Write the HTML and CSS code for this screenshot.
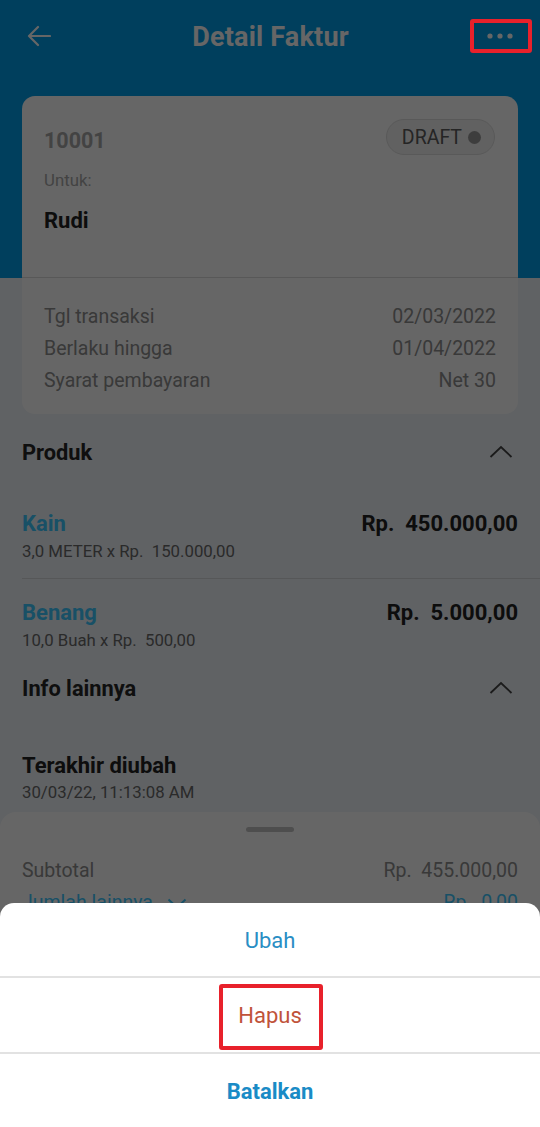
FILE: index.html
```html
<!DOCTYPE html>
<html lang="id">
<head>
<meta charset="utf-8">
<title>Detail Faktur</title>
<link rel="stylesheet" href="styles.css">
</head>
<body>
<div class="page">
  <div class="hero">
    <header class="appbar">
      <svg class="back" width="24" height="22" viewBox="0 0 24 22" aria-hidden="true">
        <path d="M23 11H2M11 2L2 11l9 9" fill="none" stroke="#fff" stroke-width="2.2" stroke-linecap="round" stroke-linejoin="round"/>
      </svg>
      <h1 class="title">Detail Faktur</h1>
      <svg class="more" width="28" height="8" viewBox="0 0 28 8" aria-hidden="true">
        <circle cx="4" cy="4" r="2.6" fill="#fff"/><circle cx="14" cy="4" r="2.6" fill="#fff"/><circle cx="24" cy="4" r="2.6" fill="#fff"/>
      </svg>
    </header>
    <section class="card">
      <div class="card-top">
        <div class="card-head">
          <span class="number">10001</span>
          <span class="pill">DRAFT<span class="pill-dot"></span></span>
        </div>
        <div class="label">Untuk:</div>
        <div class="name">Rudi</div>
      </div>
      <div class="card-bottom">
        <div class="kv"><span>Tgl transaksi</span><span>02/03/2022</span></div>
        <div class="kv"><span>Berlaku hingga</span><span>01/04/2022</span></div>
        <div class="kv"><span>Syarat pembayaran</span><span>Net 30</span></div>
      </div>
    </section>
  </div>

  <div class="section-head">
    <span>Produk</span>
    <svg class="chev" width="24" height="13" viewBox="0 0 24 13" aria-hidden="true"><path d="M1.5 12L12 2l10.5 10" fill="none" stroke="#444" stroke-width="1.8"/></svg>
  </div>
  <div class="item divided">
    <div class="item-row"><span class="item-name">Kain</span><span class="item-price">Rp.&nbsp; 450.000,00</span></div>
    <div class="item-sub">3,0 METER x Rp.&nbsp; 150.000,00</div>
  </div>
  <div class="item">
    <div class="item-row"><span class="item-name">Benang</span><span class="item-price">Rp.&nbsp; 5.000,00</span></div>
    <div class="item-sub">10,0 Buah x Rp.&nbsp; 500,00</div>
  </div>

  <div class="section-head">
    <span>Info lainnya</span>
    <svg class="chev" width="24" height="13" viewBox="0 0 24 13" aria-hidden="true"><path d="M1.5 12L12 2l10.5 10" fill="none" stroke="#444" stroke-width="1.8"/></svg>
  </div>
  <div class="info">
    <div class="info-title">Terakhir diubah</div>
    <div class="item-sub">30/03/22, 11:13:08 AM</div>
  </div>

  <section class="summary">
    <div class="handle"></div>
    <div class="sum-row"><span>Subtotal</span><span>Rp.&nbsp; 455.000,00</span></div>
    <div class="sum-row blue">
      <span class="more-amt">Jumlah lainnya
        <svg width="20" height="11" viewBox="0 0 20 11" aria-hidden="true"><path d="M1.5 1.5L10 9.5l8.5-8" fill="none" stroke="currentColor" stroke-width="2"/></svg>
      </span>
      <span>Rp.&nbsp; 0,00</span>
    </div>
  </section>
</div>

<div class="scrim"></div>

<div class="sheet">
  <div class="sheet-btn edit">Ubah</div>
  <div class="sheet-btn delete">Hapus</div>
  <div class="sheet-btn cancel">Batalkan</div>
</div>

<div class="mark mark-more"></div>
<div class="mark mark-delete"></div>
</body>
</html>
```

FILE: styles.css
```css
* { box-sizing: border-box; }
html, body { margin: 0; padding: 0; }
body {
  font-family: Roboto, "Noto Sans", "Liberation Sans", sans-serif;
  background: #f0f5fa;
  color: #222;
}
.page {
  height: 1127px;
  overflow: hidden;
  background: #f0f5fa;
}
.hero {
  background: linear-gradient(#009ee8 0, #009ee8 278px, #f0f5fa 278px);
}
.appbar {
  height: 74px;
  display: flex;
  align-items: center;
  justify-content: space-between;
  padding: 0 26px 0 27px;
}
.back { display: block; margin-top: -2px; }
.title {
  margin: 0 0 0 4px;
  font-size: 27px;
  font-weight: 700;
  color: #fff;
  letter-spacing: 0.2px;
}
.more { display: block; margin-top: -2px; }

.card {
  margin: 22px 22px 0;
  background: #fff;
  border-radius: 13px;
  overflow: hidden;
}
.card-top {
  padding: 23px 22px 0;
  border-bottom: 1.5px solid #dcdcdc;
  height: 182px;
}
.card-head {
  display: flex;
  justify-content: space-between;
  align-items: center;
  height: 36px;
}
.number {
  font-size: 21.5px;
  font-weight: 700;
  color: #a8a8a8;
  margin-top: 6px;
}
.pill {
  display: flex;
  align-items: center;
  gap: 6px;
  height: 36px;
  padding: 1px 13px 0 15px;
  border-radius: 18px;
  background: #f2f2f2;
  border: 1.5px solid #dedede;
  font-size: 19.5px;
  color: #5c5c5c;
  margin-right: 1px;
}
.pill-dot {
  width: 13px;
  height: 13px;
  border-radius: 50%;
  background: #9a9a9a;
  margin-top: -1px;
}
.label {
  margin-top: 15px;
  font-size: 16.8px;
  line-height: 20px;
  color: #a8a8a8;
}
.name {
  margin-top: 17px;
  font-size: 22px;
  line-height: 28px;
  font-weight: 700;
  color: #222;
}
.card-bottom {
  padding: 23px 22px 17px;
}
.kv {
  display: flex;
  justify-content: space-between;
  font-size: 19.5px;
  line-height: 32px;
  color: #8e8e8e;
}

.section-head {
  height: 76px;
  display: flex;
  align-items: center;
  justify-content: space-between;
  padding: 0 27px 0 22px;
  font-size: 21.8px;
  font-weight: 700;
  color: #262626;
}
.chev { display: block; margin-top: -2px; }

.item {
  padding: 19px 22px 0 22px;
}
.item.divided {
  padding-bottom: 17px;
  border-bottom: 1.5px solid #d6d9dd;
  margin-left: 22px;
  padding-left: 0;
}
.item-row {
  display: flex;
  justify-content: space-between;
  align-items: center;
  height: 28px;
}
.item-name {
  font-size: 22px;
  font-weight: 700;
  color: #3ec8ff;
}
.item-price {
  font-size: 22px;
  font-weight: 700;
  color: #222;
}
.item-sub {
  margin-top: 4px;
  font-size: 16.8px;
  line-height: 20px;
  color: #6a6a6a;
}
.info {
  padding: 26px 22px 0;
}
.info-title {
  font-size: 22px;
  line-height: 28px;
  font-weight: 700;
  color: #222;
}
.info .item-sub { margin-top: 2px; }

.summary {
  margin-top: 10px;
  background: #fff;
  border-radius: 16px 16px 0 0;
  padding: 15px 22px 30px;
  height: 330px;
}
.handle {
  width: 48px;
  height: 5px;
  border-radius: 3px;
  background: #c4c4c4;
  margin: 0 auto 27px;
}
.sum-row {
  display: flex;
  justify-content: space-between;
  align-items: center;
  font-size: 19.5px;
  line-height: 24px;
  color: #8e8e8e;
}
.sum-row.blue {
  margin-top: 8px;
  color: #3ec8ff;
}
.more-amt {
  display: flex;
  align-items: center;
  gap: 14px;
}

.scrim {
  position: fixed;
  inset: 0;
  background: rgba(0, 0, 0, 0.6);
}

.sheet {
  position: fixed;
  left: 0;
  right: 0;
  bottom: 0;
  height: 224px;
  background: #fff;
  border-radius: 14px 14px 0 0;
  display: flex;
  flex-direction: column;
}
.sheet-btn {
  flex: 1;
  display: flex;
  align-items: center;
  justify-content: center;
  font-size: 22px;
  padding-top: 2px;
}
.sheet-btn + .sheet-btn { border-top: 2px solid #e2e2e2; }
.edit { color: #2a8ec4; }
.delete { color: #c0533a; }
.cancel { color: #1a8bc6; font-weight: 700; }

.mark {
  position: fixed;
  border: 4px solid #e8212b;
  border-radius: 3px;
}
.mark-more {
  left: 470px;
  top: 19px;
  width: 62px;
  height: 34px;
}
.mark-delete {
  left: 219px;
  top: 984px;
  width: 104px;
  height: 66px;
}
```
